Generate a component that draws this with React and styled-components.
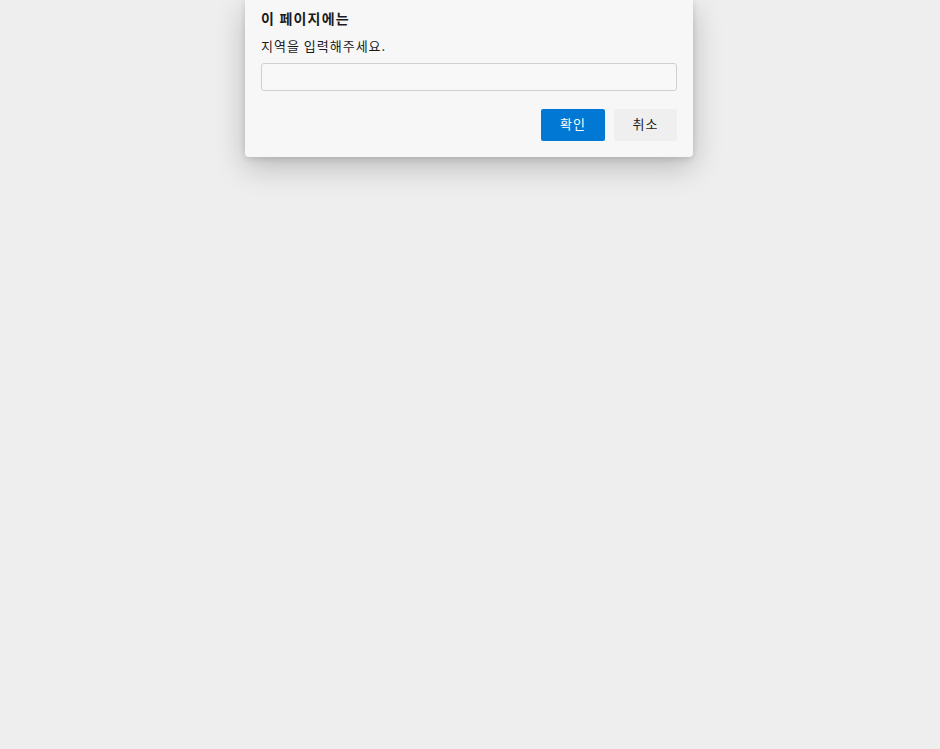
import React from "react";
import styled, { createGlobalStyle } from "styled-components";

const Global = createGlobalStyle`
  html, body { margin: 0; padding: 0; background: #eeeeee; }
  body { font-family: "Noto Sans CJK KR", "Noto Sans", sans-serif; }
`;

const Page = styled.div`
  width: 940px;
  height: 749px;
  background: #eeeeee;
  display: flex;
  justify-content: center;
  align-items: flex-start;
`;

const Dialog = styled.div`
  width: 448px;
  box-sizing: border-box;
  margin-right: 2px;
  background: #f7f7f7;
  border-radius: 0 0 4px 4px;
  box-shadow: 0 10px 30px rgba(0, 0, 0, 0.22), 0 2px 6px rgba(0, 0, 0, 0.12);
  padding: 6px 16px 16px;
  display: flex;
  flex-direction: column;
`;

const Title = styled.div`
  font-size: 14px;
  font-weight: 700;
  color: #1b1b1b;
  line-height: 24px;
  letter-spacing: 1.2px;
`;

const Message = styled.div`
  font-size: 13px;
  color: #1b1b1b;
  line-height: 20px;
  margin-top: 6px;
  letter-spacing: 1px;
`;

const Input = styled.input`
  margin-top: 7px;
  height: 28px;
  box-sizing: border-box;
  border: 1px solid #cfcfcf;
  border-radius: 3px;
  background: #f8f8f8;
  outline: none;
  padding: 0 8px;
  font-size: 13px;
`;

const Actions = styled.div`
  display: flex;
  justify-content: flex-end;
  gap: 9px;
  margin-top: 18px;
`;

const Button = styled.button`
  width: ${(p) => (p.$primary ? "64px" : "63px")};
  height: 32px;
  border: none;
  border-radius: 2px;
  padding: 0 0 3px;
  font-family: inherit;
  font-size: 13px;
  letter-spacing: 1px;
  background: ${(p) => (p.$primary ? "#0078d4" : "#efefef")};
  color: ${(p) => (p.$primary ? "#ffffff" : "#1b1b1b")};
  cursor: pointer;
`;

export default function App() {
  return (
    <>
      <Global />
      <Page>
        <Dialog>
          <Title>이 페이지에는</Title>
          <Message>지역을 입력해주세요.</Message>
          <Input type="text" />
          <Actions>
            <Button $primary>확인</Button>
            <Button>취소</Button>
          </Actions>
        </Dialog>
      </Page>
    </>
  );
}
